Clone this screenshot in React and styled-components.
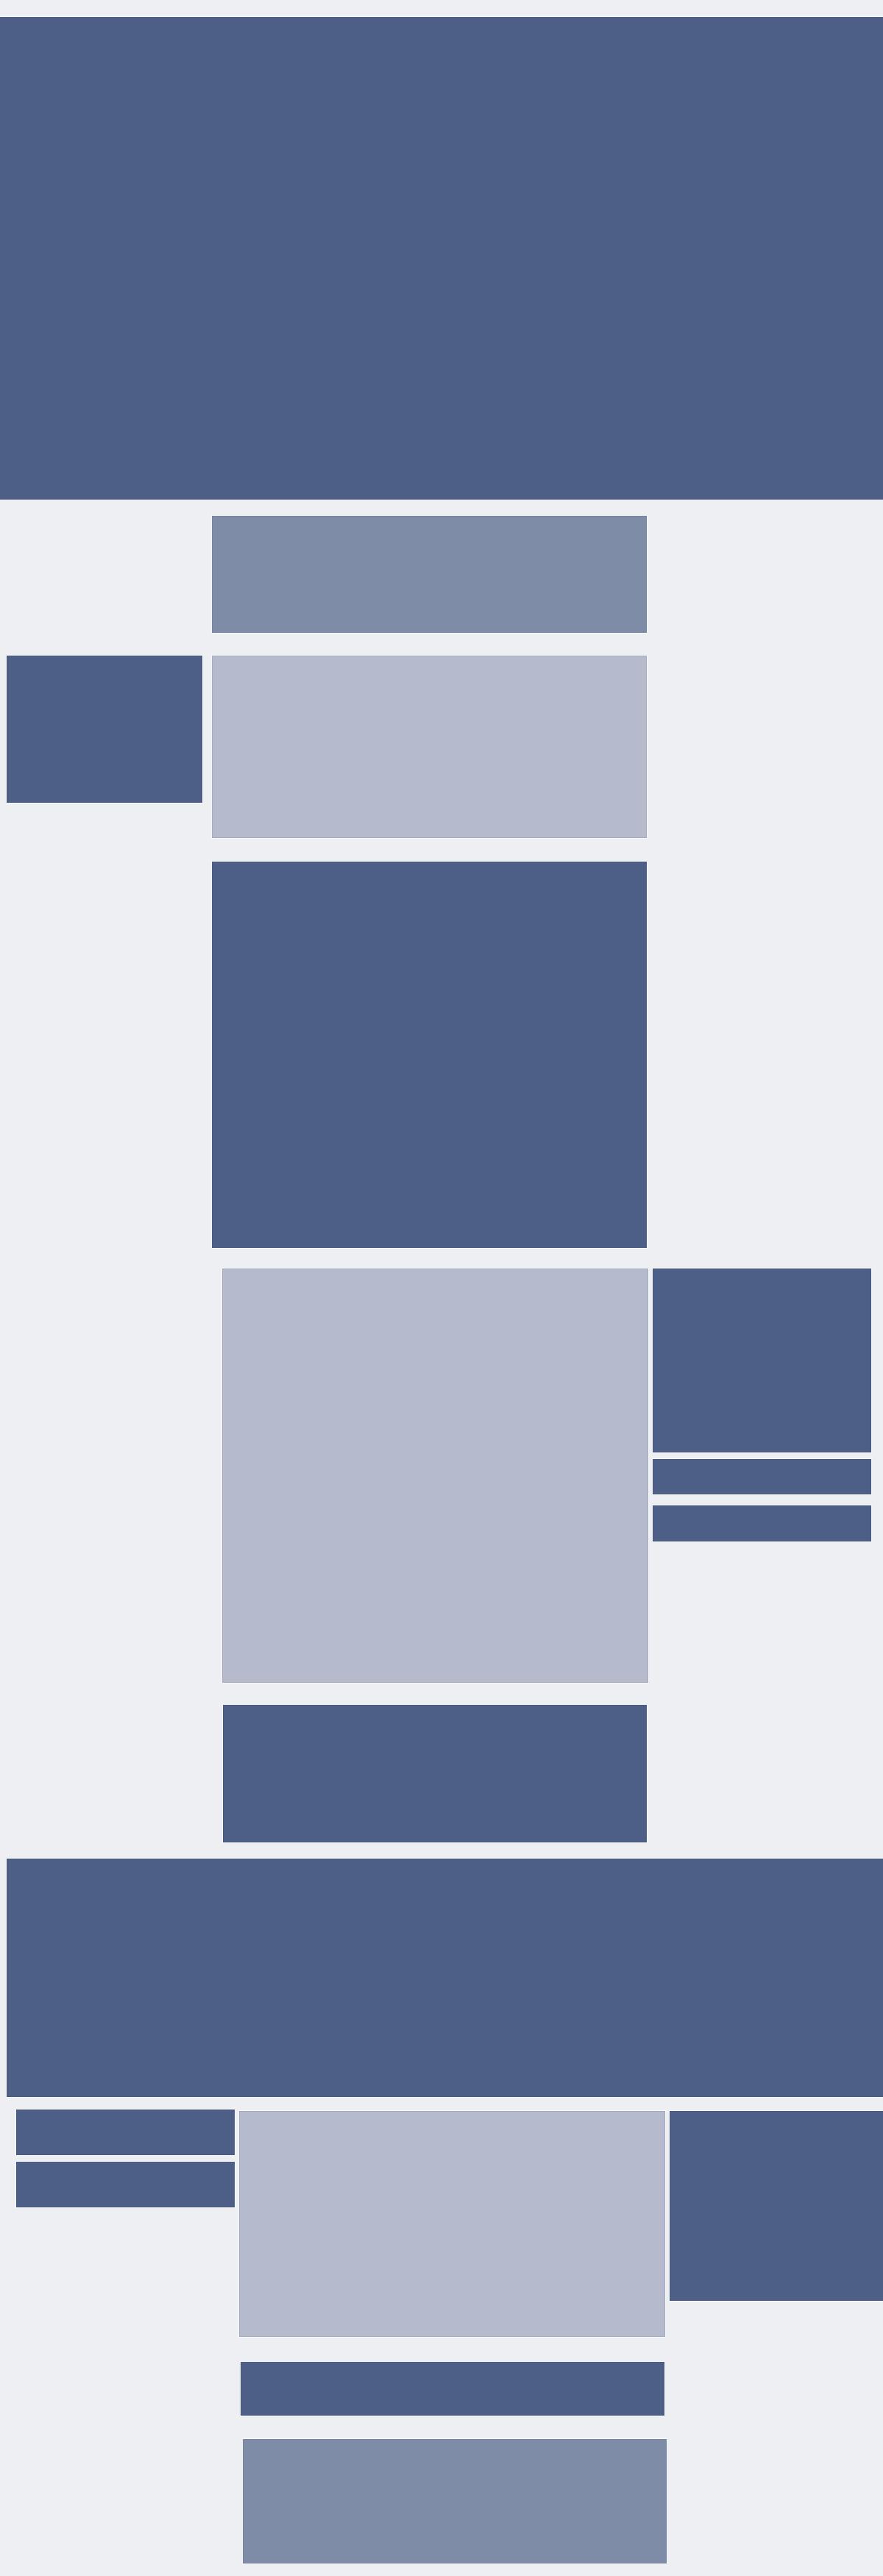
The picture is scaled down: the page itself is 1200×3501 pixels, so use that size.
import React from "react";
import styled, { createGlobalStyle, css } from "styled-components";

const GlobalStyle = createGlobalStyle`
  html, body {
    margin: 0;
    padding: 0;
    background: #eeeff3;
    font-family: "Liberation Sans", Arial, sans-serif;
  }
  #root {
    overflow-x: hidden;
  }
`;

const tones = {
  dark: "#4d5f87",
  mid: "#7f8ca7",
  light: "#b5bbcd",
};

const Page = styled.div`
  display: flex;
  flex-direction: column;
  align-items: flex-start;
  width: 1200px;
  min-height: 3501px;
  padding-top: 23px;
  box-sizing: border-box;
  overflow: hidden;
`;

const Panel = styled.div`
  flex: none;
  box-sizing: border-box;
  width: ${(p) => p.$w}px;
  height: ${(p) => p.$h}px;
  background: ${(p) => tones[p.$tone]};
  box-shadow: 0 0 0 1px rgba(255, 255, 255, 0.55),
    inset 0 0 0 1px rgba(40, 55, 90, 0.12);
  ${(p) =>
    p.$mt &&
    css`
      margin-top: ${p.$mt}px;
    `}
`;

const Banner = styled.div`
  width: 1200px;
  height: 656px;
  background: ${tones.dark};
  box-shadow: 0 -1px 0 #ffffff;
`;

const Section = styled.div`
  display: flex;
  align-items: flex-start;
  gap: ${(p) => p.$gap || 0}px;
  margin-top: ${(p) => p.$mt}px;
  margin-left: ${(p) => p.$ml || 0}px;
`;

const Column = styled.div`
  display: flex;
  flex-direction: column;
  flex: none;
  width: ${(p) => p.$w}px;
  gap: ${(p) => p.$gap || 0}px;
`;

export default function App() {
  return (
    <>
      <GlobalStyle />
      <Page>
        <Banner />

        <Section $mt={22} $ml={288}>
          <Panel $tone="mid" $w={591} $h={159} />
        </Section>

        <Section $mt={31} $ml={9} $gap={13}>
          <Panel $tone="dark" $w={266} $h={200} />
          <Panel $tone="light" $w={591} $h={248} />
        </Section>

        <Section $mt={32} $ml={288}>
          <Panel $tone="dark" $w={591} $h={525} />
        </Section>

        <Section $mt={28} $ml={302} $gap={6}>
          <Panel $tone="light" $w={579} $h={563} />
          <Column $w={297}>
            <Panel $tone="dark" $w={297} $h={250} />
            <Panel $tone="dark" $w={297} $h={48} $mt={9} />
            <Panel $tone="dark" $w={297} $h={49} $mt={15} />
          </Column>
        </Section>

        <Section $mt={30} $ml={303}>
          <Panel $tone="dark" $w={576} $h={187} />
        </Section>

        <Section $mt={22} $ml={9}>
          <Panel $tone="dark" $w={1200} $h={324} />
        </Section>

        <Section $mt={17} $ml={22} $gap={6}>
          <Column $w={297} $gap={9}>
            <Panel $tone="dark" $w={297} $h={62} />
            <Panel $tone="dark" $w={297} $h={62} />
          </Column>
          <Panel $tone="light" $w={579} $h={307} $mt={2} />
          <Panel $tone="dark" $w={300} $h={258} $mt={2} />
        </Section>

        <Section $mt={34} $ml={327}>
          <Panel $tone="dark" $w={576} $h={73} />
        </Section>

        <Section $mt={32} $ml={330}>
          <Panel $tone="mid" $w={576} $h={169} />
        </Section>
      </Page>
    </>
  );
}
